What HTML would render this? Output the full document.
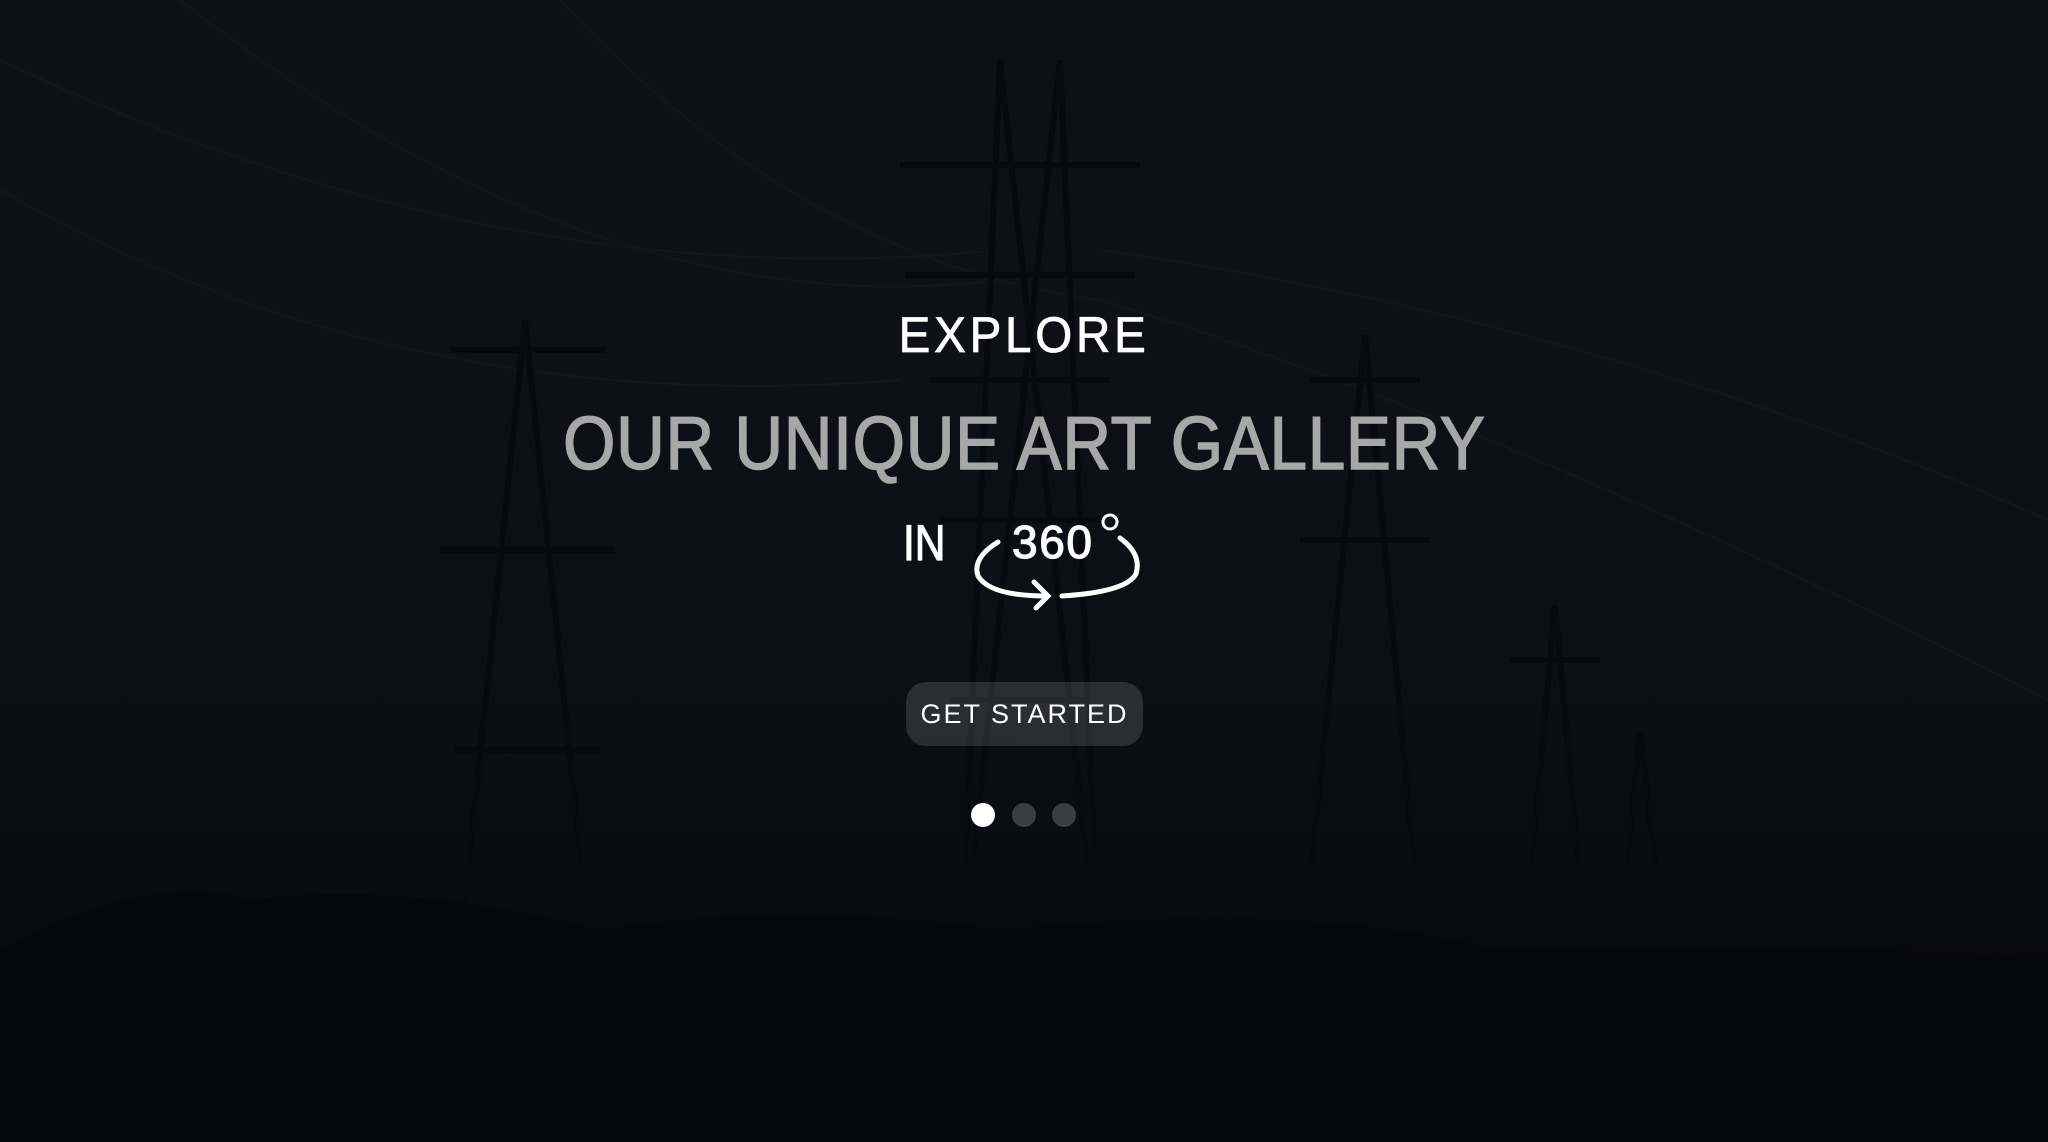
<!DOCTYPE html>
<html><head><meta charset="utf-8"><style>
html,body{margin:0;padding:0;width:2048px;height:1142px;overflow:hidden;background:#0d0f16;}
.wrap{position:relative;width:2048px;height:1142px;background:linear-gradient(#0e1017 0%,#0d0f16 60%,#07080e 85%,#04050a 100%);}
svg.bg{position:absolute;left:0;top:0;}
.t{position:absolute;left:0;width:2048px;text-align:center;font-family:"Liberation Sans",sans-serif;}
.explore{top:306px;font-size:50px;color:#fff;letter-spacing:4px;-webkit-text-stroke:0.8px #fff;}
.explore span{display:inline-block;transform:scaleX(0.95);}
.gal{top:400px;font-size:75px;color:#a7a7a8;letter-spacing:1px;-webkit-text-stroke:1.6px #a7a7a8;}
.gal span{display:inline-block;transform:scaleX(0.895);}
.in{position:absolute;left:903px;top:514px;font-family:"Liberation Sans",sans-serif;font-size:50px;color:#fff;-webkit-text-stroke:1.2px #fff;transform:scaleX(0.85);transform-origin:left;}
.btn{position:absolute;left:906px;top:682px;width:237px;height:64px;border-radius:20px;background:rgba(255,255,255,0.13);color:#fff;font-family:"Liberation Sans",sans-serif;font-size:27px;letter-spacing:2px;text-align:center;line-height:64px;}
.dot{position:absolute;top:803px;width:24px;height:24px;border-radius:50%;background:#3b3c41;}
</style></head><body><div class="wrap">
<svg class="bg" width="2048" height="1142" viewBox="0 0 2048 1142">
<g stroke="#14161d" stroke-width="2" fill="none" opacity="0.8">
<path d="M0 60 Q500 300 1000 250"/><path d="M180 0 Q600 330 1000 280"/><path d="M0 190 Q400 420 900 380"/><path d="M1100 250 Q1600 320 2048 520"/><path d="M1100 300 Q1500 420 2048 700"/><path d="M560 0 Q800 260 1100 300"/>
</g>
<g stroke="#08090e" stroke-width="6" fill="none">
<path d="M1000 60 L960 980 M1060 60 L1100 980 M960 980 L1060 60 M1100 980 L1000 60"/>
<path d="M900 165 H1140 M905 275 H1135 M930 380 H1110 M940 520 H1100 M950 700 H1090"/>
<path d="M525 320 L455 1000 M525 320 L595 1000 M450 350 H605 M440 550 H615 M455 750 H600"/>
<path d="M1365 335 L1300 980 M1365 335 L1425 980 M1310 380 H1420 M1300 540 H1430"/>
<path d="M1555 605 L1520 990 M1555 605 L1590 990 M1510 660 H1600"/>
<path d="M1640 730 L1615 990 M1640 730 L1670 990"/>
</g>
<path d="M0 950 Q150 870 250 900 Q400 880 600 930 Q800 900 1000 930 Q1300 900 1500 950 Q1800 940 2048 960 V1142 H0Z" fill="#06070c"/>
</svg>
<div class="t explore"><span>EXPLORE</span></div>
<div class="t gal"><span>OUR UNIQUE ART GALLERY</span></div>
<div class="in">IN</div>
<svg style="position:absolute;left:970px;top:508px" width="176" height="106" viewBox="0 0 176 106">
<text x="42" y="50" font-family="Liberation Sans,sans-serif" font-size="46" fill="#fff" stroke="#fff" stroke-width="1.2" textLength="80">360</text>
<circle cx="140" cy="14" r="7" stroke="#fff" stroke-width="3" fill="none"/>
<path d="M28 34 Q2 50 8 68 Q20 88 76 88" stroke="#fff" stroke-width="5" fill="none" stroke-linecap="round"/>
<path d="M64 74 L78 88 L66 100" stroke="#fff" stroke-width="5" fill="none" stroke-linecap="round"/>
<path d="M150 30 Q172 46 166 66 Q156 84 92 88" stroke="#fff" stroke-width="5" fill="none" stroke-linecap="round"/>
</svg>
<div class="btn">GET STARTED</div>
<div class="dot" style="left:971px;background:#fff"></div>
<div class="dot" style="left:1012px"></div>
<div class="dot" style="left:1052px"></div>
</div></body></html>
